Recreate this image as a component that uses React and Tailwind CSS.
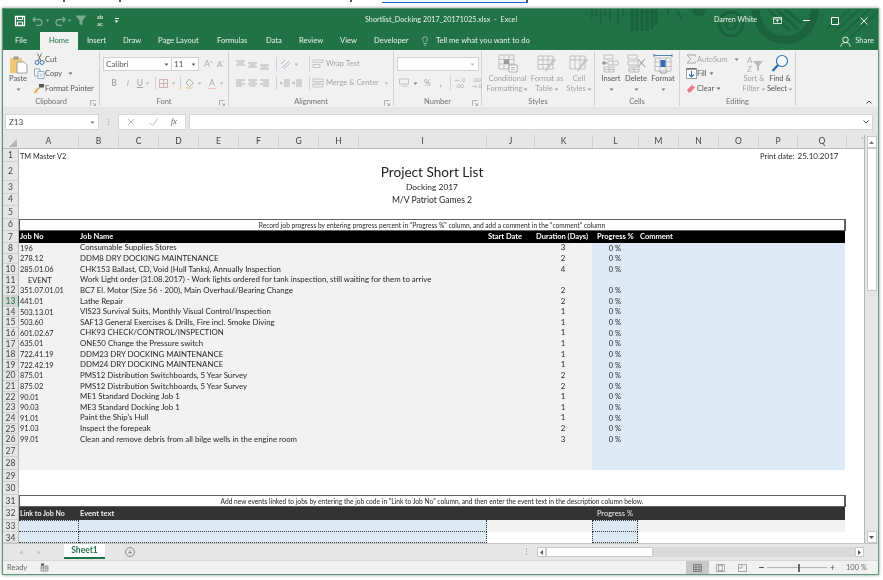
import { Lightbulb } from "lucide-react";

const jobs = [
  ["8", "196", "Consumable Supplies Stores", "3"],
  ["9", "278.12", "DDM8 DRY DOCKING MAINTENANCE", "2"],
  ["10", "285.01.06", "CHK153 Ballast, CD, Void (Hull Tanks), Annually Inspection", "4"],
  ["11", "EVENT", "Work Light order (31.08.2017) - Work lights ordered for tank inspection, still waiting for them to arrive", ""],
  ["12", "351.07.01.01", "BC7 El. Motor (Size 56 - 200), Main Overhaul/Bearing Change", "2"],
  ["13", "441.01", "Lathe Repair", "2"],
  ["14", "503.13.01", "VIS23 Survival Suits, Monthly Visual Control/Inspection", "1"],
  ["15", "503.60", "SAF13 General Exercises & Drills, Fire incl. Smoke Diving", "1"],
  ["16", "601.02.67", "CHK93 CHECK/CONTROL/INSPECTION", "1"],
  ["17", "635.01", "ONE50 Change the Pressure switch", "1"],
  ["18", "722.41.19", "DDM23 DRY DOCKING MAINTENANCE", "1"],
  ["19", "722.42.19", "DDM24 DRY DOCKING MAINTENANCE", "1"],
  ["20", "875.01", "PMS12 Distribution Switchboards, 5 Year Survey", "2"],
  ["21", "875.02", "PMS12 Distribution Switchboards, 5 Year Survey", "2"],
  ["22", "90.01", "ME1 Standard Docking Job 1", "1"],
  ["23", "90.03", "ME3 Standard Docking Job 1", "1"],
  ["24", "91.01", "Paint the Ship's Hull", "1"],
  ["25", "91.03", "Inspect the forepeak", "2"],
  ["26", "99.01", "Clean and remove debris from all bilge wells in the engine room", "3"],
];

const columns = [
  ["A", "w-[60px]"], ["B", "w-[40px]"], ["C", "w-[40px]"], ["D", "w-[40px]"], ["E", "w-[40px]"],
  ["F", "w-[40px]"], ["G", "w-[40px]"], ["H", "w-[40px]"], ["I", "w-[128px]"], ["J", "w-[48px]"],
  ["K", "w-[58px]"], ["L", "w-[46px]"], ["M", "w-[40px]"], ["N", "w-[40px]"], ["O", "w-[40px]"],
  ["P", "w-[39px]"], ["Q", "w-[49px]"],
];

function Ico({ w = 12, h = 12, vb, className = "", children }) {
  return (
    <svg width={w} height={h} viewBox={vb || `0 0 ${w} ${h}`} fill="none" className={"shrink-0 " + className}>
      {children}
    </svg>
  );
}

function Chev({ className = "text-[#8a8a8a]" }) {
  return (
    <Ico w={5} h={3} className={className}>
      <path d="M0.5 0.5h4L2.5 2.7z" fill="currentColor" />
    </Ico>
  );
}

function Launcher() {
  return (
    <svg width="6" height="6" viewBox="0 0 6 6" fill="none" className="absolute right-[3px] top-[4px] text-[#9a9a9a]">
      <path d="M0.5 5.5v-5h5M3 3l2.5 2.5M5.5 3.5v2h-2" stroke="currentColor" strokeWidth="0.8" />
    </svg>
  );
}

function Group({ label, width, children }) {
  return (
    <div className={"flex flex-col h-[55px] mt-[1px] border-r border-[#d2d2d2] shrink-0 " + width}>
      <div className="h-[45px] flex">{children}</div>
      <div className="relative h-[10px] text-center text-[7.5px] leading-[12px] text-[#707070]">
        {label}
        {label !== "Styles" && label !== "Cells" && label !== "Editing" && <Launcher />}
      </div>
    </div>
  );
}

function BigButton({ width, icon, lines, chevron, dim }) {
  return (
    <div className={"flex flex-col items-center shrink-0 " + width + " " + (dim ? "text-[#a3a3a3]" : "text-[#555555]")}>
      <div className="h-[21px] mt-[2px] flex items-center justify-center">{icon}</div>
      {lines.map((t, i) => (
        <div key={i} className="h-[10px] text-[7.5px] leading-[10px] whitespace-nowrap flex items-center gap-[1px]">
          {t}
          {chevron && i === lines.length - 1 && lines.length > 1 && <Chev className="text-[#a3a3a3]" />}
        </div>
      ))}
      {lines.length === 1 && chevron && <div className="h-[10px] flex items-center"><Chev className="text-[#777777]" /></div>}
    </div>
  );
}

function SmallRow({ icon, text, chevron, dim }) {
  return (
    <div className={"h-[14.5px] flex items-center text-[7.5px] whitespace-nowrap " + (dim ? "text-[#a3a3a3]" : "text-[#555555]")}>
      <div className="w-[12px] flex justify-center">{icon}</div>
      <span>{text}</span>
      {chevron}
    </div>
  );
}

function AlignIcon({ kind }) {
  const paths = {
    top: "M1 2h9M2.5 4h6M1 6h9",
    mid: "M1 4h9M2.5 6h6M1 8h9",
    bot: "M1 6h9M2.5 8h6M1 10h9",
    left: "M1 2h9M1 4h6M1 6h9M1 8h6",
    center: "M1 2h9M2.5 4h6M1 6h9M2.5 8h6",
    right: "M1 2h9M4 4h6M1 6h9M4 8h6",
    out: "M5 2h6M5 4h6M5 6h6M5 8h6M4 5H1M2.5 3.5 1 5l1.5 1.5",
    inn: "M5 2h6M5 4h6M5 6h6M5 8h6M1 5h3M2.5 3.5 4 5 2.5 6.5",
  };
  return (
    <Ico w={12} h={11} className="text-[#adadad]">
      <path d={paths[kind]} stroke="currentColor" strokeWidth="0.9" />
    </Ico>
  );
}

function VSep() {
  return <div className="w-[1px] h-[14px] bg-[#d2d2d2] shrink-0" />;
}

function GridIcon({ w = 20, h = 19, children }) {
  return (
    <Ico w={w} h={h} className="text-[#b4b4b4]">
      {children}
    </Ico>
  );
}

function TitlePattern() {
  return (
    <svg viewBox="580 9 298 41" className="absolute right-0 top-0 w-[298px] h-[41px]" fill="none" stroke="#1b633a">
      <path d="M592 9v10M596 9v7M601 9v14M605 9v6M610 9v12M618 9v15M623 9v8" strokeWidth="1.6" />
      <path d="M632 9v22M637 9v22M642 9v22M647 9v22M652 9v20M656 9v16" strokeWidth="3.4" />
      <path d="M668 9v6M676 9l6 10" strokeWidth="2" />
      <circle cx="699" cy="9" r="7" fill="#1b633a" stroke="none" />
      <circle cx="731" cy="24" r="5" strokeWidth="2.5" />
      <circle cx="731" cy="24" r="12" strokeWidth="3" />
      <path d="M755 9c3 24 18 31 30 31s28-8 30-31" strokeWidth="8" />
      <path d="M768 9l22 22M776 9l22 20M785 9l16 14" strokeWidth="2.4" />
      <path d="M826 30 850 9M834 32 860 9M842 34 870 9M850 38 878 12" strokeWidth="1.6" />
    </svg>
  );
}

function TitleBar() {
  return (
    <div className="relative h-[23px] flex items-center text-white">
      <div className="w-[362px] flex items-center pl-[11px] shrink-0">
        <Ico w={12} h={12}>
          <path d="M1.5 1.5h9v9h-9z" stroke="#fff" strokeWidth="1.3" />
          <path d="M3.5 1.5h5v3h-5zM3.5 10.5v-3.5h5v3.5" stroke="#fff" strokeWidth="1" />
        </Ico>
        <Ico w={12} h={10} className="ml-[6px] opacity-40">
          <path d="M3 1 1 3.5 3 6M1 3.5h6a3 3 0 0 1 0 6H4" stroke="#fff" strokeWidth="1.3" />
        </Ico>
        <Chev className="ml-[1px] text-white opacity-40" />
        <Ico w={12} h={10} className="ml-[4px] opacity-40">
          <path d="M9 1l2 2.5L9 6M11 3.5H5a3 3 0 0 0 0 6h3" stroke="#fff" strokeWidth="1.3" />
        </Ico>
        <Chev className="ml-[1px] text-white opacity-40" />
        <Ico w={12} h={11} className="ml-[3px] opacity-40">
          <path d="M0.5 0.5h11L7.5 5.5v5l-3-1.5v-3.5z" fill="#fff" />
        </Ico>
        <div className="ml-[7px] w-[12px] flex flex-col items-center text-[6px] leading-[6.5px]">
          <span>ab</span>
          <span>ac</span>
        </div>
        <div className="ml-[8px] flex flex-col items-center gap-[1px]">
          <div className="w-[4px] h-[1px] bg-white" />
          <Chev className="text-white" />
        </div>
      </div>
      <div className="w-[349px] shrink-0 text-[7.1px] tracking-[0.01em] whitespace-nowrap text-[#eaf3ed]">Shortlist_Docking 2017_20171025.xlsx&nbsp; -&nbsp; Excel</div>
      <div className="w-[59px] shrink-0 text-[7.2px] whitespace-nowrap text-[#eef5f0]">Darren White</div>
      <div className="flex items-center">
        <Ico w={9} h={8}>
          <path d="M0.5 0.5h8v6h-8zM0.5 2h8" stroke="#fff" strokeWidth="0.8" />
          <path d="M4.5 2.5v3M3.2 4 4.5 2.7 5.8 4" stroke="#fff" strokeWidth="0.8" />
        </Ico>
        <Ico w={7} h={3} className="ml-[21px]"><path d="M0 1.5h7" stroke="#fff" strokeWidth="1" /></Ico>
        <Ico w={8} h={8} className="ml-[21px]"><path d="M0.5 0.5h7v7h-7z" stroke="#fff" strokeWidth="1" /></Ico>
        <Ico w={8} h={8} className="ml-[21px]"><path d="M0.5 0.5l7 7M7.5 0.5l-7 7" stroke="#fff" strokeWidth="0.9" /></Ico>
      </div>
    </div>
  );
}

function Tabs() {
  return (
    <div className="relative h-[18px] flex items-stretch text-[7.6px] text-[#e8f1eb]">
      <div className="w-[37px] flex items-center pl-[12px]">File</div>
      <div className="w-[38px] bg-[#f1f1f1] text-[#217346] flex items-center justify-center">Home</div>
      <div className="w-[45px] flex items-center pl-[9px]">Insert</div>
      <div className="w-[35px] flex items-center">Draw</div>
      <div className="w-[59px] flex items-center">Page Layout</div>
      <div className="w-[49px] flex items-center">Formulas</div>
      <div className="w-[33px] flex items-center">Data</div>
      <div className="w-[41px] flex items-center">Review</div>
      <div className="w-[34px] flex items-center">View</div>
      <div className="w-[46px] flex items-center">Developer</div>
      <div className="flex items-center">
        <Lightbulb size={10} strokeWidth={1.3} className="text-[#e8f1eb]" />
        <span className="ml-[6px] whitespace-nowrap">Tell me what you want to do</span>
      </div>
      <div className="flex-1" />
      <div className="flex items-center pr-[4px]">
        <Ico w={11} h={11}>
          <circle cx="5.5" cy="3.8" r="2.8" stroke="#fff" strokeWidth="0.9" />
          <path d="M0.8 10.5c.5-3 2.2-4 4.7-4s4.2 1 4.7 4" stroke="#fff" strokeWidth="0.9" />
        </Ico>
        <span className="ml-[4px]">Share</span>
      </div>
    </div>
  );
}

function Ribbon() {
  return (
    <div className="h-[57px] bg-[#f1f1f1] flex shrink-0">
      <Group label="Clipboard" width="w-[97px]">
        <BigButton
          width="w-[30px]"
          lines={["Paste"]}
          chevron
          icon={
            <Ico w={19} h={20}>
              <path d="M1 4h12v15H1z" fill="#f0c878" />
              <path d="M4.5 2.5h5v3h-5z" fill="#9a9a9a" />
              <path d="M8 8h7l3 3v8H8z" fill="#fff" stroke="#8a8a8a" strokeWidth="0.8" />
            </Ico>
          }
        />
        <div className="flex flex-col pt-[1px]">
          <SmallRow text="Cut" icon={<Ico w={11} h={12}><circle cx="3" cy="9.5" r="2" stroke="#3f74b5" /><circle cx="8" cy="9.5" r="2" stroke="#3f74b5" /><path d="M3.5 0.5 7 8M7.5 0.5 4 8" stroke="#666" strokeWidth="0.9" /></Ico>} />
          <SmallRow text="Copy" chevron={<Chev className="ml-[6px] text-[#666666]" />} icon={<Ico w={11} h={11}><path d="M0.5 1h5.500v7h-5.500z" fill="#f7f7f7" stroke="#7d99b8" strokeWidth="0.8" /><path d="M4 3.500h6v7h-6z" fill="#fff" stroke="#7d99b8" strokeWidth="0.8" /><path d="M5.500 6h3M5.500 8h3" stroke="#7d99b8" strokeWidth="0.7" /></Ico>} />
          <SmallRow text="Format Painter" icon={<Ico w={12} h={11}><path d="M6 1h5v3.500h-5z" fill="#555" /><path d="M7 4.500 3 7" stroke="#c89b4a" strokeWidth="1.4" /><path d="M0.500 9.500 3.500 6l1.500 2-2.500 2.500z" fill="#e8b24a" /></Ico>} />
        </div>
      </Group>

      <Group label="Font" width="w-[129px]">
        <div className="flex flex-col pt-[6px] pl-[3px] gap-[5px]">
          <div className="flex items-center h-[14px]">
            <div className="w-[69px] h-[14px] bg-white border border-[#d0d0d0] flex items-center justify-between px-[2px] text-[8px] text-[#555555]">
              Calibri<Chev className="text-[#555555]" />
            </div>
            <div className="w-[27px] h-[14px] bg-white border border-l-0 border-[#d0d0d0] flex items-center justify-between px-[2px] text-[8px] text-[#555555]">
              11<Chev className="text-[#555555]" />
            </div>
            <span className="ml-[5px] text-[9px] text-[#a8a8a8] w-[13px]">A<sup className="text-[5px]">^</sup></span>
            <span className="text-[8px] text-[#a8a8a8]">A<sup className="text-[5px]">ˇ</sup></span>
          </div>
          <div className="flex items-center h-[14px] pl-[4px] text-[#a8a8a8] text-[8.5px]">
            <span className="w-[14px] text-center font-bold">B</span>
            <span className="w-[14px] text-center italic">I</span>
            <span className="w-[10px] text-center underline">U</span>
            <Chev className="text-[#bbbbbb]" />
            <div className="w-[1px] h-[13px] bg-[#d2d2d2] ml-[5px] mr-[3px]" />
            <Ico w={9} h={9}><path d="M0.5 0.5h8v8h-8zM4.5 0.5v8M0.5 4.5h8" stroke="#c4a4a4" strokeWidth="0.8" /></Ico>
            <Chev className="ml-[3px] text-[#bbbbbb]" />
            <div className="w-[1px] h-[13px] bg-[#d2d2d2] ml-[4px] mr-[4px]" />
            <Ico w={10} h={11}><path d="M4 1 1 5l3.5 3.5L8.5 5z" stroke="#b0b0b0" /><path d="M1 10h7" stroke="#e6d8a8" strokeWidth="1.6" /></Ico>
            <Chev className="ml-[2px] text-[#bbbbbb]" />
            <span className="ml-[6px] w-[8px] border-b border-[#e8c0c0] leading-[10px] text-center">A</span>
            <Chev className="ml-[3px] text-[#bbbbbb]" />
          </div>
        </div>
      </Group>

      <Group label="Alignment" width="w-[165px]">
        <div className="flex flex-col pt-[6px] pl-[6px] gap-[5px] text-[7.5px] text-[#a3a3a3]">
          <div className="flex items-center h-[14px]">
            <AlignIcon kind="top" />
            <AlignIcon kind="mid" />
            <AlignIcon kind="bot" />
            <div className="ml-[5px] mr-[3px]"><VSep /></div>
            <Ico w={12} h={11}><path d="M2 9 9 2M4 10l6-6M1 5l4-4" stroke="#b5a8c8" strokeWidth="0.9" /></Ico>
            <Chev className="ml-[2px] text-[#bbbbbb]" />
            <div className="ml-[10px] mr-[2px]"><VSep /></div>
            <Ico w={12} h={10}><path d="M1 1h10v2.500h-10zM1 5.500h7v3h-7z" stroke="#bcbcbc" strokeWidth="0.8" /></Ico>
            <span className="ml-[2px] whitespace-nowrap">Wrap Text</span>
          </div>
          <div className="flex items-center h-[14px]">
            <AlignIcon kind="left" />
            <AlignIcon kind="center" />
            <AlignIcon kind="right" />
            <div className="ml-[5px] mr-[2px]"><VSep /></div>
            <AlignIcon kind="out" />
            <AlignIcon kind="inn" />
            <div className="ml-[6px] mr-[2px]"><VSep /></div>
            <Ico w={12} h={10}><path d="M1 1h10v8h-10zM1 3.500h10M1 6.500h10M3 5h6" stroke="#bcbcbc" strokeWidth="0.8" /></Ico>
            <span className="ml-[2px] whitespace-nowrap">Merge &amp; Center</span>
            <Chev className="ml-[5px] text-[#bbbbbb]" />
          </div>
        </div>
      </Group>

      <Group label="Number" width="w-[88px]">
        <div className="flex flex-col pt-[6px] pl-[3px] gap-[5px] text-[#a3a3a3]">
          <div className="w-[82px] h-[14px] bg-white border border-[#d0d0d0] flex items-center justify-end pr-[3px]"><Chev className="text-[#bbbbbb]" /></div>
          <div className="flex items-center h-[14px] pl-[2px] text-[8.5px]">
            <Ico w={11} h={10}><path d="M0.500 1h9v5h-9z" stroke="#b8b8b8" strokeWidth="0.8" /><path d="M2 8h7" stroke="#c8c8c8" /></Ico>
            <Chev className="ml-[3px] text-[#777777]" />
            <span className="ml-[6px]">%</span>
            <span className="ml-[9px] font-bold">,</span>
            <div className="ml-[8px] mr-[2px]"><VSep /></div>
            <div className="text-[5.5px] leading-[6px] w-[14px] text-center">←.0<br />.00</div>
            <div className="text-[5.5px] leading-[6px] w-[14px] text-center ml-[3px]">.00<br />→.0</div>
          </div>
        </div>
      </Group>

      <Group label="Styles" width="w-[113px]">
        <div className="flex pl-[4px]">
          <BigButton dim width="w-[43px]" lines={["Conditional", "Formatting"]} chevron icon={<GridIcon><path d="M1 1h15v14H1zM1 5.500h15M1 10h15M6 1v14M11 1v14" stroke="currentColor" strokeWidth="0.8" /><path d="M6 5.500h5V10H6z" fill="#9a9a9a" /><path d="M11 11h8v7h-8z" fill="#fff" stroke="#9a9a9a" strokeWidth="0.8" /><path d="M13 13.500h4M13 15.500h4" stroke="#9a9a9a" strokeWidth="0.8" /></GridIcon>} />
          <BigButton dim width="w-[36px]" lines={["Format as", "Table"]} chevron icon={<GridIcon><path d="M1 2h15v13H1zM1 6h15M1 10.500h15M6 2v13M11 2v13" stroke="currentColor" strokeWidth="0.8" /><path d="M19 6 10 16l-2 2 .5-3L17 4z" fill="#c4c4c4" /></GridIcon>} />
          <BigButton dim width="w-[28px]" lines={["Cell", "Styles"]} chevron icon={<GridIcon><path d="M1 2h15v13H1zM1 6h15M6 2v13M11 2v13" stroke="currentColor" strokeWidth="0.8" /><path d="M19 6 10 16l-2 2 .5-3L17 4z" fill="#c4c4c4" /></GridIcon>} />
        </div>
      </Group>

      <Group label="Cells" width="w-[85px]">
        <div className="flex pl-[4px]">
          <BigButton width="w-[24px]" lines={["Insert"]} chevron icon={<GridIcon><path d="M3 1h9v4H3zM3 13h10v5H3zM8 13v5M3 15.500h10M7 7h10v4H7zM12 7v4" stroke="currentColor" strokeWidth="0.8" /><path d="M1 9h5M3 7v4" stroke="#666" strokeWidth="0.9" /></GridIcon>} />
          <BigButton width="w-[26px]" lines={["Delete"]} chevron icon={<GridIcon><path d="M2 1h9v4H2zM3 13h10v5H3zM8 13v5M3 15.500h10M2 7h10v4H2z" stroke="currentColor" strokeWidth="0.8" /><path d="M12 5l7 8M19 5l-7 8" stroke="#8a8a8a" strokeWidth="1" /></GridIcon>} />
          <BigButton width="w-[28px]" lines={["Format"]} chevron icon={<Ico w={20} h={20}><path d="M2 4h16v13H2zM2 8h16M2 12.500h16M7 4v13M13 4v13" stroke="#b4b4b4" strokeWidth="0.8" /><path d="M1 1.500h18M1 0v3M19 0v3" stroke="#3f74b5" strokeWidth="0.9" /><path d="M7.500 6h5v7h-5z" fill="#2f6eb5" /><path d="M6 17l2 2h5l1-2" stroke="#888" strokeWidth="0.8" /></Ico>} />
        </div>
      </Group>

      <Group label="Editing" width="w-[116px]">
        <div className="flex">
          <div className="w-[61px] flex flex-col pt-[1px] pl-[5px]">
            <SmallRow dim text="AutoSum" chevron={<Chev className="ml-[7px] text-[#777777]" />} icon={<Ico w={10} h={10}><path d="M9.500 2.500V1H1l4 4-4 4h8.500V7.500" stroke="#a0a0a0" strokeWidth="0.9" /></Ico>} />
            <SmallRow text="Fill" chevron={<Chev className="ml-[2px] text-[#666666]" />} icon={<Ico w={11} h={11}><path d="M0.500 0.500h10v10h-10z" fill="#fff" stroke="#888" strokeWidth="0.8" /><path d="M0.500 1h10" stroke="#555" strokeWidth="1.2" /><path d="M5.500 3v6M3 6.500 5.500 9 8 6.500" stroke="#2f6eb5" strokeWidth="1.1" /></Ico>} />
            <SmallRow text="Clear" chevron={<Chev className="ml-[2px] text-[#666666]" />} icon={<Ico w={10} h={9}><path d="M1 6 6 1l3 2.500-5 5H2.500z" fill="#e8788a" /></Ico>} />
          </div>
          <BigButton dim width="w-[26px]" lines={["Sort &", "Filter"]} chevron icon={<Ico w={18} h={18}><text x="2" y="8" fontSize="8" fill="#b0b0b0">A</text><text x="2" y="17" fontSize="8" fill="#b0b0b0">Z</text><path d="M8 6h10l-4 5v5l-2-1v-4z" fill="#b8b8b8" /></Ico>} />
          <BigButton width="w-[26px]" lines={["Find &", "Select"]} chevron icon={<Ico w={18} h={19}><circle cx="11" cy="7" r="5.500" fill="#fff" stroke="#2f6eb5" strokeWidth="1.2" /><path d="M7 11 1.500 17" stroke="#2f6eb5" strokeWidth="2.4" /></Ico>} />
        </div>
      </Group>

      <div className="flex-1 flex items-end justify-end pr-[6px] pb-[3px]">
        <Ico w={6} h={4}><path d="M0.500 3.500 3 1l2.500 2.500" stroke="#555" strokeWidth="1" /></Ico>
      </div>
    </div>
  );
}

function FormulaBar() {
  return (
    <div className="h-[28px] bg-[#e6e6e6] flex items-start pt-[7px] pl-[2px] shrink-0">
      <div className="w-[94px] h-[16px] bg-white border border-[#d6d6d6] flex items-center justify-between px-[3px] text-[8px] text-[#444444]">
        Z13<Chev className="text-[#777777]" />
      </div>
      <div className="w-[19px] h-[16px] flex flex-col items-center justify-center gap-[1px]">
        <div className="w-[1px] h-[1.5px] bg-[#b0b0b0]" />
        <div className="w-[1px] h-[1.5px] bg-[#b0b0b0]" />
        <div className="w-[1px] h-[1.5px] bg-[#b0b0b0]" />
      </div>
      <div className="w-[68px] h-[16px] bg-white border border-[#d6d6d6] flex items-center">
        <Ico w={8} h={8} className="ml-[8px]"><path d="M1 1l6 6M7 1 1 7" stroke="#b4b4b4" strokeWidth="0.9" /></Ico>
        <Ico w={9} h={8} className="ml-[14px]"><path d="M0.500 4.500 3.500 7.500 8.500 1" stroke="#b4b4b4" strokeWidth="0.9" /></Ico>
        <span className="ml-[13px] text-[8px] italic font-['Liberation_Serif',serif] text-[#555555]">fx</span>
      </div>
      <div className="ml-[3px] w-[684px] h-[16px] bg-white border border-[#d6d6d6] flex items-center justify-end pr-[3px]">
        <Ico w={6} h={4}><path d="M0.500 0.500 3 3l2.500-2.500" stroke="#555" strokeWidth="1" /></Ico>
      </div>
    </div>
  );
}

function RowHead({ n, height }) {
  const selected = n === "13";
  return (
    <div
      className={
        "w-[16px] shrink-0 flex items-center justify-center pt-[1px] text-[8.5px] border-b border-[#cfcfcf] " +
        (selected ? "bg-[#d4d4d4] text-[#217346] border-r border-r-[#217346] " : "bg-[#e6e6e6] text-[#444444] border-r border-r-[#b8b8b8] ") +
        height
      }
    >
      {n}
    </div>
  );
}

function Row({ n, height, children }) {
  return (
    <div className={"flex text-[#262626] " + height}>
      <RowHead n={n} height={height} />
      <div className="flex-1 flex min-w-0">{children}</div>
    </div>
  );
}

function JobRow({ job }) {
  const [n, no, name, days] = job;
  const isEvent = no === "EVENT";
  return (
    <Row n={n} height="h-[10.63px]">
      <div className="w-[573px] bg-[#f2f2f2] flex items-center text-[7.85px] whitespace-nowrap">
        <div className={"w-[60px] text-[7.4px] " + (isEvent ? "pl-[9px]" : "pl-[1px]")}>{no}</div>
        <div className="w-[455px] pl-[1px]">{name}</div>
        <div className="w-[58px] text-center">{days}</div>
      </div>
      <div className="w-[253px] bg-[#dde9f5] flex items-center text-[7.5px]">
        {!isEvent && <div className="w-[46px] text-center">0 %</div>}
      </div>
    </Row>
  );
}

function NoteRow({ n, height, children }) {
  return (
    <Row n={n} height={height}>
      <div className="w-[827px] border border-[#5f5f5f] border-r-2 text-center text-[6.65px] leading-[10px] whitespace-nowrap bg-white">
        {children}
      </div>
    </Row>
  );
}

function EventInputRow({ n, height, band, top }) {
  const bandBg = band ? "bg-[#f2f2f2]" : "bg-white";
  const dash = "border-dotted border-[#333333] border-r border-b ";
  return (
    <Row n={n} height={height}>
      <div className={"w-[60px] bg-[#dde9f5] " + dash + (top ? "border-t " : "")} />
      <div className={"w-[408px] bg-[#dde9f5] " + dash} />
      <div className={"w-[105px] " + bandBg} />
      <div className={"w-[46px] bg-[#dde9f5] border-l " + dash + (top ? "border-t " : "")} />
      <div className={"w-[207px] " + bandBg} />
    </Row>
  );
}

function Sheet() {
  return (
    <div className="w-[862px] shrink-0 border-r border-[#b5b5b5]">
      <div className="h-[14px] flex bg-[#e6e6e6] border-b border-[#b8b8b8] text-[8.5px] text-[#444444]">
        <div className="w-[16px] flex items-end justify-end pr-[2px] pb-[1px]">
          <Ico w={8} h={8}><path d="M8 0v8H0z" fill="#b5b5b5" /></Ico>
        </div>
        {columns.map(([letter, width]) => (
          <div key={letter} className={"flex items-center justify-center border-r border-[#cfcfcf] " + width}>{letter}</div>
        ))}
        <div className="flex-1 flex justify-end pr-[1px] text-[#777777] text-[7px]">'</div>
      </div>

      <Row n="1" height="h-[13px]">
        <div className="w-[60px] pl-[1px] pt-[1px] text-[7.3px] leading-[13px] whitespace-nowrap">TM Master V2</div>
        <div className="w-[681px]" />
        <div className="pt-[1px] text-[7.6px] leading-[13px] whitespace-nowrap">Print date:</div>
        <div className="ml-[3px] pt-[1px] text-[8px] leading-[13px] whitespace-nowrap">25.10.2017</div>
      </Row>
      <Row n="2" height="h-[19px]">
        <div className="w-[826px] pt-[1px] text-center text-[13.6px] leading-[19px] text-[#222222]">Project Short List</div>
      </Row>
      <Row n="3" height="h-[12.5px]">
        <div className="w-[826px] text-center text-[8.4px] leading-[12.5px]">Docking 2017</div>
      </Row>
      <Row n="4" height="h-[12.5px]">
        <div className="w-[826px] text-center text-[8.6px] leading-[13.5px]">M/V Patriot Games 2</div>
      </Row>
      <Row n="5" height="h-[12.5px]" />
      <NoteRow n="6" height="h-[12.5px]">Record job progress by entering progress percent in "Progress %" column, and add a comment in the "comment" column</NoteRow>
      <Row n="7" height="h-[12px]">
        <div className="w-[826px] bg-black text-white flex items-center font-bold text-[7.5px] whitespace-nowrap">
          <div className="w-[60px] pl-[1px]">Job No</div>
          <div className="w-[408px] pl-[1px]">Job Name</div>
          <div className="w-[48px] pl-[1px]">Start Date</div>
          <div className="w-[62px] pl-[1px]">Duration (Days)</div>
          <div className="w-[43px]">Progress %</div>
          <div>Comment</div>
        </div>
      </Row>
      {jobs.map((job) => (
        <JobRow key={job[0]} job={job} />
      ))}
      <Row n="27" height="h-[12.5px]">
        <div className="w-[573px] bg-[#f2f2f2]" />
        <div className="w-[253px] bg-[#dde9f5]" />
      </Row>
      <Row n="28" height="h-[12.5px]">
        <div className="w-[573px] bg-[#f2f2f2]" />
        <div className="w-[253px] bg-[#dde9f5]" />
      </Row>
      <Row n="29" height="h-[12.5px]" />
      <Row n="30" height="h-[12.5px]" />
      <NoteRow n="31" height="h-[12.5px]">Add new events linked to jobs by entering the job code in "Link to Job No" column, and then enter the event text in the description column below.</NoteRow>
      <Row n="32" height="h-[12.5px]">
        <div className="w-[826px] bg-[#333333] text-[#eeeeee] flex items-center font-bold text-[7.5px] whitespace-nowrap">
          <div className="w-[60px] pl-[1px] text-[7px]">Link to Job No</div>
          <div className="w-[513px] pl-[1px]">Event text</div>
          <div className="w-[46px] text-center font-normal">Progress %</div>
        </div>
      </Row>
      <EventInputRow n="33" height="h-[12.5px]" band top />
      <EventInputRow n="34" height="h-[11px]" />
    </div>
  );
}

function VScroll() {
  return (
    <div className="w-[13px] h-[408px] bg-[#e6e6e6] flex flex-col items-center justify-between shrink-0">
      <div className="flex flex-col items-center w-full">
        <div className="h-[12px] w-[10px] mt-[1px] bg-white border border-[#c8c8c8] flex items-center justify-center">
          <Ico w={5} h={3}><path d="M0 3h5L2.5 0z" fill="#777" /></Ico>
        </div>
        <div className="w-[10px] h-[143px] bg-white border border-[#c8c8c8]" />
      </div>
      <div className="h-[12px] w-[10px] bg-white border border-[#c8c8c8] flex items-center justify-center">
        <Ico w={5} h={3}><path d="M0 0h5L2.5 3z" fill="#555" /></Ico>
      </div>
    </div>
  );
}

function SheetBar() {
  return (
    <div className="h-[17px] bg-[#e6e6e6] border-t border-[#c4c4c4] flex items-start">
      <Ico w={4} h={5} className="ml-[16px] mt-[6px]"><path d="M3.5 0v5L0.5 2.5z" fill="#c0c0c0" /></Ico>
      <Ico w={4} h={5} className="ml-[14px] mt-[6px]"><path d="M0.5 0v5l3-2.5z" fill="#c0c0c0" /></Ico>
      <div className="ml-[23px] w-[41px] h-[15px] bg-white border-b-2 border-[#217346] text-[#217346] font-bold text-[8.5px] leading-[13px] text-center">Sheet1</div>
      <div className="ml-[20px] mt-[3px] w-[10px] h-[10px] rounded-full border border-[#8a8a8a] flex items-center justify-center text-[8px] leading-none text-[#666666]">+</div>
      <div className="ml-[391px] mt-[4px] flex flex-col gap-[1px]">
        <div className="w-[1px] h-[1.5px] bg-[#b0b0b0]" />
        <div className="w-[1px] h-[1.5px] bg-[#b0b0b0]" />
        <div className="w-[1px] h-[1.5px] bg-[#b0b0b0]" />
      </div>
      <div className="ml-[10px] mt-[3px] h-[10px] w-[318px] flex bg-[#d9d9d9]">
        <div className="w-[9px] bg-white border border-[#c8c8c8] flex items-center justify-center">
          <Ico w={3} h={5}><path d="M3 0v5L0 2.5z" fill="#555" /></Ico>
        </div>
        <div className="w-[107px] bg-white border border-[#c8c8c8]" />
      </div>
      <div className="w-[9px] h-[10px] mt-[3px] bg-white border border-[#c8c8c8] flex items-center justify-center">
        <Ico w={3} h={5}><path d="M0 0v5l3-2.5z" fill="#555" /></Ico>
      </div>
    </div>
  );
}

function StatusBar() {
  return (
    <div className="h-[14px] bg-[#f1f1f1] border-t border-[#d8d8d8] flex items-center text-[7.5px] text-[#666666]">
      <span className="ml-[4px] w-[33px]">Ready</span>
      <Ico w={9} h={9}><path d="M1 3h7v5H1zM1 5h7M3.5 3v5M6 3v5" stroke="#777" strokeWidth="0.7" /><path d="M1 0.5h3v2H1z" fill="#555" /></Ico>
      <div className="flex-1" />
      <div className="w-[23px] h-full bg-[#c8c8c8] flex items-center justify-center">
        <Ico w={9} h={8}><path d="M0.5 0.5h8v7h-8zM3 0.5v7M6 0.5v7M0.5 3h8M0.5 5.5h8" stroke="#666" strokeWidth="0.7" /></Ico>
      </div>
      <div className="w-[23px] flex justify-center">
        <Ico w={9} h={8}><path d="M0.5 0.5h8v7h-8zM2.5 1.5v5h4v-5z" stroke="#888" strokeWidth="0.7" /></Ico>
      </div>
      <div className="w-[22px] flex justify-center">
        <Ico w={9} h={8}><path d="M0.5 0.5h8v7h-8M0.5 0.5v7M4 0.5v3.5h-3.5" stroke="#888" strokeWidth="0.7" /></Ico>
      </div>
      <span className="ml-[5px] w-[5px] h-[1px] bg-[#555555]" />
      <div className="ml-[3px] w-[60px] h-[1px] bg-[#b5b5b5] flex items-center">
        <div className="ml-[31px] w-[2px] h-[8px] bg-[#666666]" />
      </div>
      <span className="ml-[3px] text-[9px] leading-none text-[#555555]">+</span>
      <span className="ml-[11px] mr-[11px] whitespace-nowrap">100 %</span>
    </div>
  );
}

export default function App() {
  return (
    <div className="w-[883px] h-[580px] bg-white overflow-hidden font-['Lato',sans-serif] [filter:blur(0.4px)]">
      <svg width="883" height="8" viewBox="0 0 883 8" className="block">
        <path d="M64 0v2M120 0v2M351 0v2M527 0v2" stroke="#222" strokeWidth="1.5" />
        <path d="M382 2.5h146" stroke="#1a63d6" strokeWidth="1.2" />
      </svg>
      <div className="ml-[2px] w-[877px] h-[567px] flex flex-col border border-[#5c9a77] shadow-[0_0_3px_rgba(0,0,0,0.45)]">
        <div className="relative bg-[#217346] shrink-0">
          <TitlePattern />
          <TitleBar />
          <Tabs />
        </div>
        <Ribbon />
        <FormulaBar />
        <div className="flex shrink-0 bg-white">
          <Sheet />
          <VScroll />
        </div>
        <SheetBar />
        <StatusBar />
      </div>
    </div>
  );
}
